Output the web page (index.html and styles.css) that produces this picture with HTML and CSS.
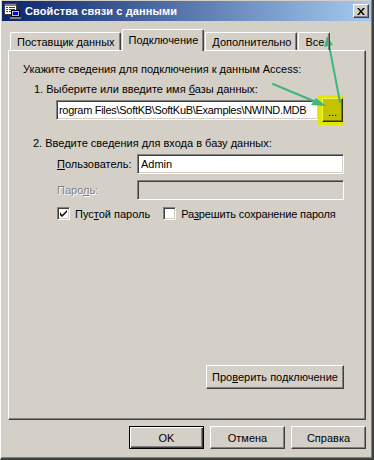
FILE: index.html
```html
<!DOCTYPE html>
<html lang="ru">
<head>
    <meta charset="UTF-8">
    <title>Свойства связи с данными</title>
    <link rel="stylesheet" href="styles.css">
</head>
<body>

    <div class="window">
        <div class="titlebar">
            <svg class="app-icon" width="17" height="16" viewBox="0 0 17 16">
                <rect x="0.5" y="0.5" width="12" height="11" fill="#fff" stroke="#404040"/>
                <rect x="1" y="1" width="11" height="2" fill="#808080"/>
                <rect x="2" y="4" width="2" height="1" fill="#404040"/>
                <rect x="5" y="4" width="6" height="1" fill="#404040"/>
                <rect x="2" y="6" width="2" height="1" fill="#404040"/>
                <rect x="5" y="6" width="6" height="1" fill="#404040"/>
                <rect x="2" y="8" width="2" height="1" fill="#404040"/>
                <rect x="5" y="8" width="3" height="1" fill="#404040"/>
                <rect x="7.5" y="7.5" width="8" height="6" fill="#c0c0c0" stroke="#000"/>
                <rect x="9" y="9" width="5" height="3" fill="#0000ff"/>
                <rect x="6" y="14" width="11" height="2" fill="#808080"/>
            </svg>
            <span class="title">Свойства связи с данными</span>
            <button class="close-btn">
                <svg width="8" height="7" viewBox="0 0 8 7">
                    <path d="M0 0h2l2 2.5L6 0h2L5 3.5 8 7H6L4 4.5 2 7H0l3-3.5z" fill="#000"/>
                </svg>
            </button>
        </div>

        <div class="content">
            <div class="tabs">
                <div class="tab">Поставщик данных</div>
                <div class="tab active">Подключение</div>
                <div class="tab">Дополнительно</div>
                <div class="tab">Все</div>
            </div>

            <div class="panel">
                <p class="intro">Укажите сведения для подключения к данным Access:</p>

                <p class="step">1. Выберите или введите имя <u>б</u>азы данных:</p>
                <div class="file-row">
                    <div class="field file-field">rogram Files\SoftKB\SoftKuB\Examples\NWIND.MDB</div>
                    <div class="highlight">
                        <button class="btn browse-btn">...</button>
                    </div>
                </div>

                <p class="step step-two">2. Введите сведения для входа в базу данных:</p>
                <div class="form-row">
                    <label class="form-label"><u>П</u>ользователь:</label>
                    <div class="field">Admin</div>
                </div>
                <div class="form-row">
                    <label class="form-label disabled">Паро<u>л</u>ь:</label>
                    <div class="field field-disabled"></div>
                </div>
                <div class="check-row">
                    <label class="check">
                        <span class="box">
                            <svg width="7" height="7" viewBox="0 0 7 7"><path d="M0 2v3l2 2 5-5V0L2 5z" fill="#000"/></svg>
                        </span>
                        <span>Пус<u>т</u>ой пароль</span>
                    </label>
                    <label class="check">
                        <span class="box"></span>
                        <span class="long-label">Ра<u>з</u>решить сохранение пароля</span>
                    </label>
                </div>

                <div class="test-row">
                    <button class="btn test-btn">Про<u>в</u>ерить подключение</button>
                </div>
            </div>

            <div class="actions">
                <button class="btn default-btn">OK</button>
                <button class="btn">Отмена</button>
                <button class="btn">Справка</button>
            </div>
        </div>

        <!-- annotation arrows drawn over the dialog -->
        <svg class="arrows" width="374" height="460" viewBox="0 0 374 460">
            <g stroke="#3fb67c" stroke-width="2" fill="none" stroke-linecap="round">
                <line x1="273" y1="85" x2="316" y2="103"/>
                <line x1="340" y1="103" x2="329" y2="46"/>
            </g>
            <g fill="#3fb67c">
                <polygon points="326,107 311,106 316,99"/>
                <polygon points="327,37 324,48 333,46"/>
            </g>
        </svg>
    </div>

</body>
</html>
```

FILE: styles.css
```css
* {
    margin: 0;
    padding: 0;
    box-sizing: border-box;
    font-family: 'Liberation Sans', Arial, sans-serif;
    font-size: 11px;
    font-weight: normal;
}
body {
    background-color: #d4d0c8;
    width: 374px;
    height: 460px;
    overflow: hidden;
}
.window {
    position: relative;
    width: 374px;
    height: 460px;
    display: flex;
    flex-direction: column;
    background: #d4d0c8;
    padding: 1px;
    border-left: 1px solid #ffffff;
    border-right: 2px solid #404040;
    border-bottom: 2px solid #404040;
    box-shadow: inset -1px -1px #808080;
    color: #000;
}
.titlebar {
    height: 20px;
    display: flex;
    align-items: center;
    padding: 0 2px;
    background: linear-gradient(to right, #0a246a, #a6caf0);
}
.app-icon {
    flex-shrink: 0;
    margin-right: 4px;
}
.title {
    flex: 1;
    color: #fff;
    font-weight: bold;
    font-size: 11px;
    letter-spacing: 0.1px;
}
.close-btn {
    width: 16px;
    height: 14px;
    display: flex;
    align-items: center;
    justify-content: center;
    background: #d4d0c8;
    border: 1px solid;
    border-color: #fff #404040 #404040 #fff;
    box-shadow: inset -1px -1px #808080;
}
.content {
    flex: 1;
    display: flex;
    flex-direction: column;
    padding: 8px 5px 8px 6px;
}
.tabs {
    display: flex;
    align-items: flex-end;
    height: 21px;
    padding-left: 2px;
    position: relative;
    z-index: 1;
}
.tab {
    height: 18px;
    padding: 2px 5px 0 6px;
    margin-right: 1px;
    border: 1px solid;
    border-bottom: none;
    border-color: #fff #404040 #fff #fff;
    border-radius: 2px 2px 0 0;
    box-shadow: inset -1px 0 #808080;
    line-height: 14px;
    white-space: nowrap;
}
.tab.active {
    height: 22px;
    margin-bottom: -1px;
    padding-top: 3px;
    background: #d4d0c8;
}
.panel {
    flex: 1;
    display: flex;
    flex-direction: column;
    border: 1px solid;
    border-color: #fff #404040 #404040 #fff;
    box-shadow: inset -1px -1px #808080;
    padding: 12px 21px 30px 14px;
}
.intro, .step {
    line-height: 13px;
}
.step {
    margin-top: 7px;
    padding-left: 11px;
}
.step-two {
    margin-top: 12px;
    padding-left: 10px;
}
.file-row {
    display: flex;
    align-items: center;
    margin-top: -1px;
    padding-left: 33px;
}
.field {
    flex: 1;
    height: 20px;
    background: #fff;
    border: 1px solid;
    border-color: #808080 #fff #fff #808080;
    box-shadow: inset 1px 1px #404040, inset -1px -1px #d4d0c8;
    padding: 3px 3px 0 3px;
    line-height: 13px;
    white-space: nowrap;
    overflow: hidden;
}
.file-field {
    flex: none;
    width: 263px;
    padding-left: 2px;
    letter-spacing: -0.3px;
}
.field-disabled {
    background: #d4d0c8;
}
.highlight {
    width: 28px;
    height: 30px;
    margin-left: -1px;
    display: flex;
    align-items: center;
    justify-content: center;
    background: #e5e600;
}
.btn {
    height: 23px;
    background: #d4d0c8;
    border: 1px solid;
    border-color: #fff #404040 #404040 #fff;
    box-shadow: inset -1px -1px #808080;
    color: #000;
}
.browse-btn {
    width: 21px;
    height: 24px;
    margin-left: 3px;
    background: #c4c300;
    border-color: #f0f060 #303000 #303000 #f0f060;
    box-shadow: inset -1px -1px #7a7a00;
    line-height: 10px;
    padding-top: 4px;
}
.form-row {
    display: flex;
    align-items: center;
    margin-top: 4px;
    padding-left: 34px;
}
.form-row + .form-row {
    margin-top: 6px;
}
.form-label {
    width: 80px;
}
.disabled {
    color: #808080;
    text-shadow: 1px 1px #fff;
}
.check-row {
    display: flex;
    align-items: center;
    margin-top: 7px;
    padding-left: 34px;
}
.check {
    display: flex;
    align-items: center;
    margin-right: 13px;
    white-space: nowrap;
}
.long-label {
    letter-spacing: -0.15px;
}
.box {
    width: 13px;
    height: 13px;
    margin-right: 5px;
    display: flex;
    align-items: center;
    justify-content: center;
    background: #fff;
    border: 1px solid;
    border-color: #808080 #fff #fff #808080;
    box-shadow: inset 1px 1px #404040, inset -1px -1px #d4d0c8;
}
.test-row {
    margin-top: auto;
    display: flex;
    justify-content: flex-end;
}
.test-btn {
    width: 138px;
    height: 24px;
}
.actions {
    display: flex;
    justify-content: flex-end;
    gap: 6px;
    margin-top: 6px;
}
.actions .btn {
    width: 75px;
}
.default-btn {
    border: 1px solid #000;
    box-shadow: inset 1px 1px #fff, inset -1px -1px #404040, inset -2px -2px #808080;
}
.arrows {
    position: absolute;
    left: -1px;
    top: -1px;
    pointer-events: none;
}
```
